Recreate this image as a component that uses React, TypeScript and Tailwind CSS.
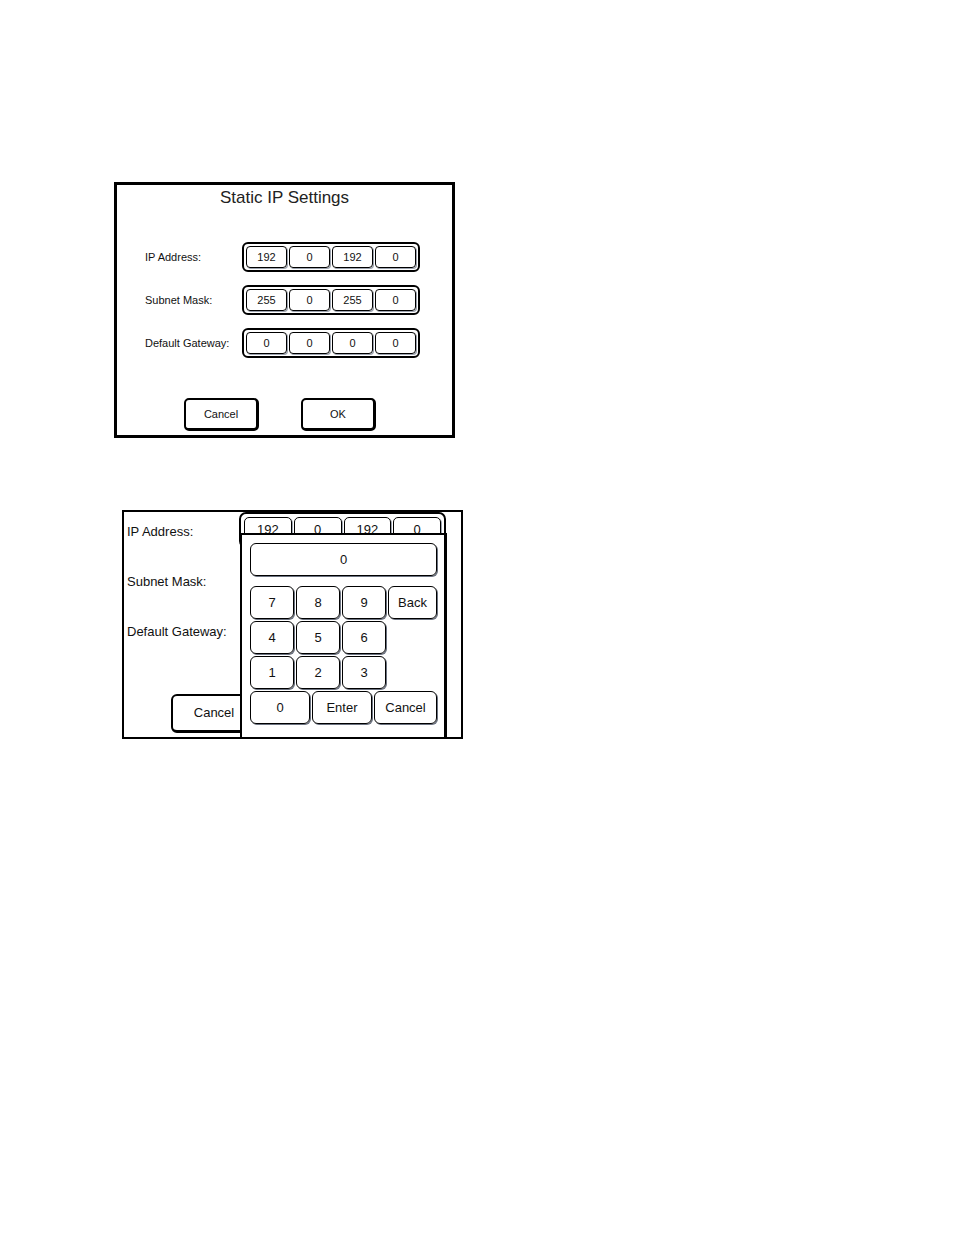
const ipRows = [
  { label: 'IP Address:', values: ['192', '0', '192', '0'] },
  { label: 'Subnet Mask:', values: ['255', '0', '255', '0'] },
  { label: 'Default Gateway:', values: ['0', '0', '0', '0'] },
];

// ── Four-octet field frame ──
function OctetFrame({ values, big }: { values: string[]; big?: boolean }) {
  return (
    <div
      className={
        big
          ? 'w-[207px] h-[36px] border-2 border-black rounded-[7px] p-[3px] flex gap-[2px]'
          : 'w-[178px] h-[30px] border-2 border-black rounded-[6px] p-[2px] flex gap-[2px]'
      }
    >
      {values.map((v, i) => (
        <div
          key={i}
          className={
            big
              ? 'flex-1 border border-black rounded-[5px] shadow-[1px_1px_0_#9ca3af] flex items-center justify-center text-[13px]'
              : 'flex-1 border border-black rounded-[4px] shadow-[1px_1px_0_#9ca3af] flex items-center justify-center text-[11px]'
          }
        >
          {v}
        </div>
      ))}
    </div>
  );
}

function Key({ label, w }: { label: string; w: string }) {
  return (
    <div
      className={`${w} h-[33px] border border-black rounded-[6px] shadow-[1px_1px_0_#6b7280] flex items-center justify-center text-[13px]`}
    >
      {label}
    </div>
  );
}

export default function App() {
  return (
    <div
      className="min-h-[1235px] bg-white text-[#111] flex flex-col pt-[182px]"
      style={{ fontFamily: '"Liberation Sans", Arial, sans-serif' }}
    >
      {/* Static IP Settings screen */}
      <div className="ml-[114px] w-[341px] h-[256px] border-[3px] border-black flex flex-col">
        <div className="mt-[1px] h-[24px] leading-[24px] text-center text-[17px] text-[#222]">Static IP Settings</div>
        <div className="mt-[32px] flex flex-col gap-[13px]">
          {ipRows.map((row) => (
            <div key={row.label} className="flex items-center pl-[28px]">
              <span className="w-[97px] text-[11px]">{row.label}</span>
              <OctetFrame values={row.values} />
            </div>
          ))}
        </div>
        <div className="mt-[40px] flex pl-[67px] gap-[42px]">
          <div className="w-[75px] h-[33px] border-2 border-r-[3px] border-b-[3px] border-black rounded-[5px] flex items-center justify-center text-[11px]">
            Cancel
          </div>
          <div className="w-[75px] h-[33px] border-2 border-r-[3px] border-b-[3px] border-black rounded-[5px] flex items-center justify-center text-[11px]">
            OK
          </div>
        </div>
      </div>

      {/* Zoomed screen with keypad */}
      <div className="ml-[122px] mt-[72px] w-[341px] h-[229px] border-2 border-black relative overflow-hidden">
        <div className="flex flex-col gap-[14px]">
          {ipRows.map((row) => (
            <div key={row.label} className="flex items-center pl-[3px] h-[36px]">
              <span className="w-[112px] pt-[3px] text-[13px]">{row.label}</span>
              {row.label === 'IP Address:' && <OctetFrame values={row.values} big />}
            </div>
          ))}
        </div>
        <div className="mt-[46px] ml-[47px] w-[87px] h-[39px] border-2 border-r-[3px] border-b-[3px] border-black rounded-[6px] flex items-center justify-center text-[13px]">
          Cancel
        </div>

        {/* Keypad popup */}
        <div className="absolute left-[116px] top-[21px] bottom-0 w-[207px] bg-white border-l-2 border-t-2 border-r-[3px] border-black pl-[8px] pt-[8px] flex flex-col">
          <div className="w-[187px] h-[33px] border border-black rounded-[6px] shadow-[1px_1px_0_#6b7280] flex items-center justify-center text-[13px]">
            0
          </div>
          <div className="mt-[10px] flex flex-col gap-[2px]">
            <div className="flex gap-[2px]">
              <Key label="7" w="w-[44px]" />
              <Key label="8" w="w-[44px]" />
              <Key label="9" w="w-[44px]" />
              <Key label="Back" w="w-[49px]" />
            </div>
            <div className="flex gap-[2px]">
              <Key label="4" w="w-[44px]" />
              <Key label="5" w="w-[44px]" />
              <Key label="6" w="w-[44px]" />
            </div>
            <div className="flex gap-[2px]">
              <Key label="1" w="w-[44px]" />
              <Key label="2" w="w-[44px]" />
              <Key label="3" w="w-[44px]" />
            </div>
            <div className="flex gap-[2px]">
              <Key label="0" w="w-[60px]" />
              <Key label="Enter" w="w-[60px]" />
              <Key label="Cancel" w="w-[63px]" />
            </div>
          </div>
        </div>
      </div>
    </div>
  );
}
